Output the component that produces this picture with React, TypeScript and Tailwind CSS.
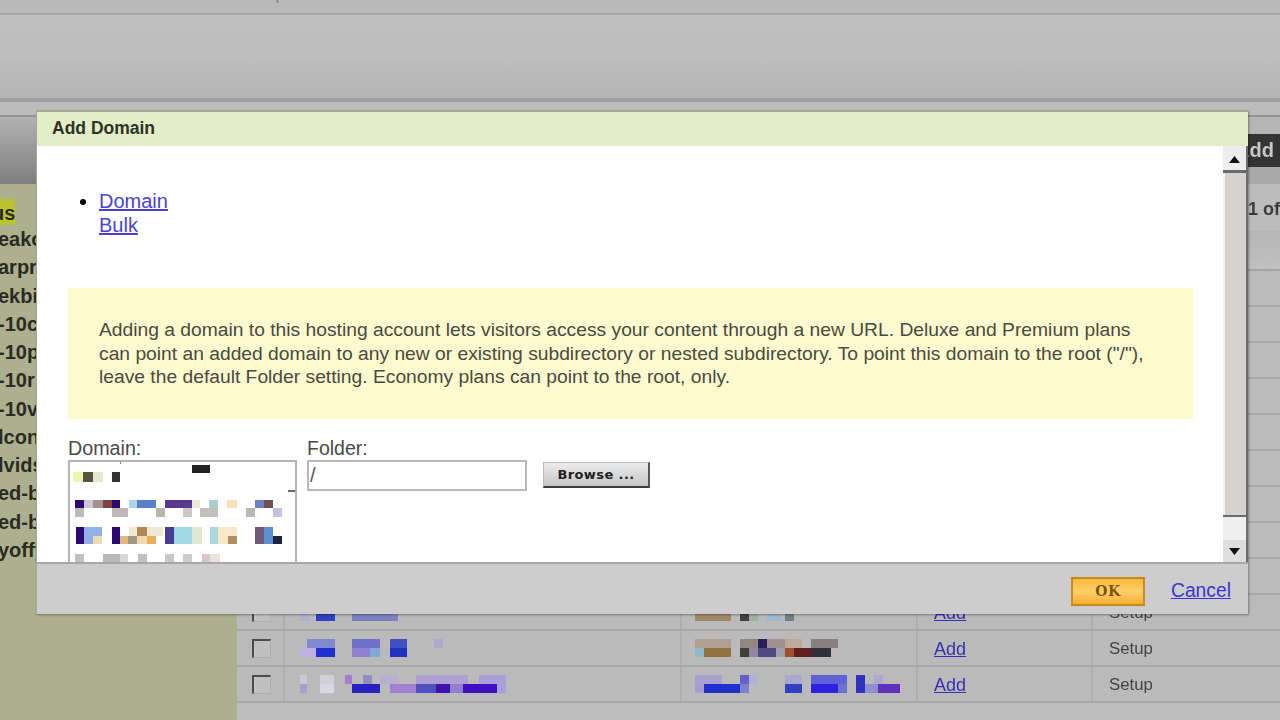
import React from 'react';

type Cell = [number, number, number, number, string];

// pixelated (censored) text blocks, coordinates are page pixels
const Mosaic: React.FC<{ x: number; y: number; w: number; h: number; cells: Cell[] }> = ({ x, y, w, h, cells }) => (
  <svg width={w} height={h} viewBox={`${x} ${y} ${w} ${h}`} className="block shrink-0">
    {cells.map((c, i) => (
      <rect key={i} x={c[0]} y={c[1]} width={c[2] - c[0]} height={c[3]} fill={c[4]} />
    ))}
  </svg>
);

const listCells: Cell[] = [
  [192, 465, 210, 8, '#222222'], [120, 462, 121, 2, '#888888'], [288, 490, 296, 2, '#666688'],
  [73, 472, 83, 10, '#eef5b0'], [83, 472, 93, 10, '#555540'], [93, 472, 103, 10, '#e8e8d0'], [112, 472, 120, 10, '#333333'],
  [75, 500, 84, 8, '#2a0a6e'], [84, 500, 93, 8, '#c8c8d8'], [93, 500, 103, 8, '#a09090'], [103, 500, 112, 8, '#804040'], [112, 500, 120, 8, '#2a0a70'],
  [129, 500, 137, 8, '#a8d8e8'], [137, 500, 156, 8, '#5a80c8'], [165, 500, 192, 8, '#5a3a90'], [192, 500, 200, 8, '#f0e8d8'], [209, 500, 218, 8, '#a8d0d0'],
  [227, 500, 237, 8, '#f5e0b8'], [255, 500, 264, 8, '#7080c8'], [264, 500, 273, 8, '#705050'],
  [75, 508, 84, 9, '#bbbbbb'], [112, 508, 128, 9, '#c0b8b8'], [156, 508, 165, 9, '#b8b8a8'], [183, 508, 192, 9, '#d0c8c0'], [200, 508, 218, 9, '#c0c0b8'],
  [246, 508, 255, 9, '#b8b8b0'], [273, 508, 282, 9, '#c8c0e0'],
  [76, 527, 84, 17, '#2a0a70'], [84, 527, 102, 9, '#90b0e8'], [112, 527, 120, 17, '#2a0a70'], [129, 527, 137, 9, '#f5e8d0'], [137, 527, 147, 9, '#b08850'],
  [147, 527, 163, 9, '#f0e8d0'], [165, 527, 174, 17, '#4a3a90'], [174, 527, 192, 17, '#a0d8e4'], [192, 527, 202, 17, '#e0e8d0'], [210, 527, 218, 17, '#a8d8e0'],
  [218, 527, 237, 9, '#f8e8c8'], [255, 527, 264, 17, '#705878'], [264, 527, 273, 17, '#5a90d0'],
  [84, 536, 93, 8, '#90b0e8'], [93, 536, 102, 8, '#f0d8b0'], [120, 536, 128, 8, '#e0b880'], [128, 536, 137, 8, '#a09880'], [137, 536, 147, 8, '#f0d8b0'],
  [147, 536, 156, 8, '#e8b060'], [218, 536, 228, 8, '#f8e8c8'], [228, 536, 237, 8, '#b09060'], [273, 536, 282, 8, '#202040'],
  [75, 554, 84, 9, '#c0c0c0'], [103, 554, 120, 9, '#b8b8b8'], [120, 554, 128, 9, '#d8d8d8'], [138, 554, 147, 9, '#c0c0c0'], [165, 554, 174, 9, '#c8c8c8'],
  [183, 554, 192, 9, '#cccccc'], [202, 554, 210, 9, '#d8c8c8'], [210, 554, 220, 9, '#f0e0e0'],
];

const names: Cell[][] = [
  [[300, 605, 309, 18, '#b0b0d0'], [316, 605, 335, 18, '#3040c0'], [352, 605, 398, 18, '#8080c0']],
  [
    [307, 640, 335, 9, '#8088d0'], [352, 640, 380, 9, '#7070c8'], [390, 640, 407, 9, '#4050c0'], [434, 640, 443, 9, '#b0a8d0'],
    [300, 649, 316, 9, '#c0b0e0'], [316, 649, 335, 9, '#2030d0'], [352, 649, 370, 9, '#9080d0'], [370, 649, 380, 9, '#80a8d8'], [390, 649, 407, 9, '#2030c0'],
  ],
  [
    [300, 677, 307, 9, '#c8c8d8'], [320, 677, 334, 9, '#d0d0d8'], [345, 677, 352, 9, '#a080c8'], [363, 677, 372, 9, '#9090c0'], [380, 677, 398, 9, '#b8b0d0'],
    [416, 677, 468, 9, '#b0a0d0'], [479, 677, 506, 9, '#a8a0d8'],
    [300, 686, 307, 9, '#a8a0c8'], [320, 686, 334, 9, '#d8d8e0'], [352, 686, 380, 9, '#2820c0'], [390, 686, 416, 9, '#a080d0'], [416, 686, 436, 9, '#5050c0'],
    [436, 686, 450, 9, '#4010b0'], [450, 686, 463, 9, '#9080d0'], [463, 686, 497, 9, '#4010c0'], [497, 686, 506, 9, '#a8a0d8'],
  ],
];

const hosts: Cell[][] = [
  [[695, 605, 731, 18, '#a08868'], [740, 605, 749, 18, '#404040'], [749, 605, 758, 18, '#a0b0a0'], [767, 605, 782, 18, '#a0b8c8'], [785, 605, 794, 18, '#708088']],
  [
    [695, 640, 731, 9, '#b0a090'], [740, 640, 758, 9, '#908880'], [758, 640, 767, 9, '#2a2060'], [767, 640, 785, 9, '#a09090'], [785, 640, 802, 9, '#c0a898'], [811, 640, 838, 9, '#888080'],
    [695, 649, 704, 9, '#90b8c8'], [704, 649, 731, 9, '#907040'], [740, 649, 749, 9, '#404038'], [749, 649, 758, 9, '#9088a0'], [758, 649, 776, 9, '#504880'],
    [776, 649, 785, 9, '#a0a0a8'], [785, 649, 794, 9, '#a05030'], [794, 649, 811, 9, '#602020'], [811, 649, 831, 9, '#303038'],
  ],
  [
    [695, 677, 722, 9, '#a8a0d0'], [740, 677, 749, 9, '#6060c8'], [749, 677, 758, 9, '#b0b0d8'], [785, 677, 802, 9, '#a8a8d0'], [811, 677, 847, 9, '#6060d8'],
    [856, 677, 865, 9, '#3030c0'], [874, 677, 883, 9, '#a8a8d0'],
    [695, 686, 704, 9, '#a0a0d0'], [704, 686, 740, 9, '#2030c8'], [740, 686, 749, 9, '#8080c8'], [785, 686, 802, 9, '#3040c0'], [811, 686, 838, 9, '#3020e0'],
    [838, 686, 847, 9, '#7070d0'], [856, 686, 865, 9, '#3030c0'], [865, 686, 878, 9, '#9090d0'], [878, 686, 900, 9, '#6030c0'],
  ],
];

const sites = ['eako', 'arpra', 'ekbi', '-10c', '-10p', '-10r', '-10v', 'lcon', 'lvids', 'ed-bi', 'ed-bi', 'yoffy'];

const ArrowIcon: React.FC<{ down?: boolean }> = ({ down }) => (
  <svg width="13" height="7" viewBox="0 0 13 7">
    <polygon points={down ? '1,0 12,0 6.5,7' : '6.5,0 12,7 1,7'} fill="#111" />
  </svg>
);

export default function App() {
  return (
    <div className="w-[1280px] h-[720px] overflow-hidden bg-[#bdbdbd]">
      <div className="relative w-[1280px] h-[720px] flex flex-col blur-[0.7px] font-['Liberation_Sans',Arial,sans-serif]">
        {/* top menu, cut off by the video frame */}
        <div className="h-[13px] bg-[#b9b9b9] flex pl-[4px] text-[17px] leading-[18px] text-[#777777] overflow-hidden shrink-0">
          <span className="w-[121px] -mt-[14px]">Access</span>
          <span className="w-[125px] -mt-[14px]">Network</span>
          <span className="-mt-[14px]">Help</span>
        </div>
        <div className="h-[2px] bg-[#a6a6a6] shrink-0" />
        <div className="h-[83px] bg-gradient-to-b from-[#bfbfbf] via-[#bebebe] to-[#b4b4b4] shrink-0" />
        <div className="h-[4px] bg-[#a0a0a0] shrink-0" />
        <div className="h-[15px] bg-[#bcbcbc] border-b-2 border-[#949494] shrink-0" />

        <div className="flex flex-1 min-h-0">
          {/* left site list */}
          <div className="w-[237px] shrink-0 flex flex-col bg-[#adb08f]">
            <div className="h-[67px] bg-gradient-to-b from-[#b2b2b2] to-[#7f7f7f] shrink-0" />
            <div className="pt-[15px] flex flex-col text-[20px] font-bold leading-[28.2px] text-[#2b2b22]">
              <div className="h-[26px] whitespace-nowrap overflow-hidden">
                <span className="inline-block w-[15px] bg-[#b9c42c] overflow-hidden">
                  <span className="inline-block -ml-[8px]">us</span>
                </span>
              </div>
              {sites.map((s, i) => (
                <div key={i} className="h-[28.25px] whitespace-nowrap overflow-hidden">
                  <span className="inline-block -ml-[2px]">{s}</span>
                </div>
              ))}
            </div>
          </div>

          {/* domains table */}
          <div className="flex-1 flex flex-col min-w-0">
            <div className="h-[17px] bg-[#b5b5b5] shrink-0" />
            <div className="h-[33px] bg-[#b5b5b5] flex justify-end shrink-0">
              <div className="w-[42px] bg-[#343434] text-[#c8c8c8] text-[20px] font-bold leading-[33px] overflow-hidden whitespace-nowrap">
                <span className="inline-block -ml-[3px]">Add</span>
              </div>
            </div>
            <div className="h-[17px] bg-[#a9a9a9] shrink-0" />
            <div className="h-[47px] bg-[#bcbcbc] flex justify-end shrink-0">
              <span className="w-[32px] text-[18px] font-bold leading-[50px] whitespace-nowrap text-[#3a3a3a] overflow-hidden">1 of</span>
            </div>
            <div className="h-[40px] bg-gradient-to-b from-[#b6b6b6] to-[#c0c0c0] border-b-2 border-[#a4a4a4] shrink-0" />
            {Array.from({ length: 9 }).map((_, i) => (
              <div key={i} className="h-[36px] border-b-2 border-[#a8a8a8] bg-[#bcbcbc] shrink-0" />
            ))}
            {[0, 1, 2].map(i => (
              <div key={i} className="h-[36px] flex border-b-2 border-[#a6a6a6] bg-[#bababa] shrink-0">
                <div className="w-[48px] border-r-2 border-[#aeaeae] flex items-center pl-[15px]">
                  <div className="w-[19px] h-[19px] border-t-2 border-l-2 border-[#4c4c4c] border-r border-b border-r-[#adadad] border-b-[#adadad] bg-[#c0c0c0]" />
                </div>
                <div className="w-[397px] border-r-2 border-[#aeaeae] flex items-center pl-[15px]">
                  <Mosaic x={300} y={i === 0 ? 605 : i === 1 ? 640 : 677} w={210} h={18} cells={names[i]} />
                </div>
                <div className="w-[236px] border-r-2 border-[#aeaeae] flex items-center pl-[13px]">
                  <Mosaic x={695} y={i === 0 ? 605 : i === 1 ? 640 : 677} w={210} h={18} cells={hosts[i]} />
                </div>
                <div className="w-[175px] border-r-2 border-[#aeaeae] flex items-center pl-[16px] pt-[2px]">
                  <a className="text-[18px] leading-[22px] text-[#3a2fb0] underline">Add</a>
                </div>
                <div className="flex-1 flex items-center pl-[16px] pt-[2px] text-[16.8px] text-[#444444]">Setup</div>
              </div>
            ))}
            <div className="flex-1 bg-[#bdbdbd]" />
          </div>
        </div>

        {/* Add Domain dialog */}
        <div className="absolute left-[36px] top-[110px] w-[1212px] h-[504px] flex flex-col border-t-2 border-l border-[#a6a893] shadow-[1px_1px_2px_rgba(0,0,0,0.35)]">
          <div className="h-[34px] shrink-0 bg-[#e3edc7] pl-[15px] text-[17.5px] font-bold leading-[32px] text-[#2f3328]">Add Domain</div>
          <div className="h-[418px] shrink-0 flex overflow-hidden bg-white border-b-2 border-[#a8a8a8]">
            <div className="flex-1 min-w-0 pl-[31px] pr-[30px] pt-[43px]">
              <ul className="list-disc pl-[31px] text-[20px] leading-[24px] text-[#4d3fd6]">
                <li className="marker:text-black">
                  <a className="block underline">Domain</a>
                  <a className="block underline">Bulk</a>
                </li>
              </ul>
              <div className="mt-[51px] h-[131px] bg-[#fdfacf] pl-[31px] pt-[30px] text-[19.25px] leading-[23.6px] text-[#4a4a40] whitespace-nowrap">
                Adding a domain to this hosting account lets visitors access your content through a new URL. Deluxe and Premium plans<br />
                can point an added domain to any new or existing subdirectory or nested subdirectory. To point this domain to the root ("/"),<br />
                leave the default Folder setting. Economy plans can point to the root, only.
              </div>
              <div className="mt-[17px] flex gap-[10px]">
                <div className="w-[229px] shrink-0">
                  <div className="text-[19.7px] leading-[24px] text-[#4a4a4a]">Domain:</div>
                  <div className="h-[120px] border-2 border-[#b4b4b4] bg-white overflow-hidden">
                    <Mosaic x={70} y={462} w={225} h={116} cells={listCells} />
                  </div>
                </div>
                <div>
                  <div className="text-[19.5px] leading-[24px] text-[#4a4a4a]">Folder:</div>
                  <div className="flex items-start gap-[16px]">
                    <input
                      defaultValue="/"
                      className="w-[220px] h-[31px] border-2 border-[#b8b8b8] rounded-[1px] px-[1px] text-[20px] text-[#555555] outline-none"
                    />
                    <button className="mt-[2px] w-[107px] h-[26px] bg-gradient-to-b from-[#ececec] to-[#c6c6c6] border border-[#bbbbbb] border-r-2 border-b-2 border-r-[#555555] border-b-[#3c3c3c] text-[13px] font-bold tracking-[0.4px] text-[#222222] font-['DejaVu_Sans',sans-serif]">
                      Browse ...
                    </button>
                  </div>
                </div>
              </div>
            </div>
            {/* scrollbar */}
            <div className="w-[25px] shrink-0 flex flex-col border-r-2 border-[#6f6d6a]">
              <div className="h-[24px] bg-[#ededed] flex items-center justify-center pt-[3px]">
                <ArrowIcon />
              </div>
              <div className="h-[3px] bg-[#6b6b6b]" />
              <div className="h-[342px] bg-[#d5d3cf] border-l-2 border-[#f2f2f2]" />
              <div className="h-[2px] bg-[#6b6b6b]" />
              <div className="h-[23px] bg-[#efefef]" />
              <div className="flex-1 bg-[#dedede] flex items-center justify-center">
                <ArrowIcon down />
              </div>
            </div>
          </div>
          <div className="flex-1 bg-[#cdcdcd] flex items-center justify-end pr-[17px] pt-[4px] gap-[26px]">
            <button className="w-[74px] h-[29px] bg-gradient-to-b from-[#fbb838] via-[#fdd06a] to-[#f6ae2e] border-2 border-[#c98a1c] text-[14px] font-bold tracking-[0.5px] text-[#7a5406] font-['DejaVu_Serif',serif]">
              OK
            </button>
            <a className="text-[19.3px] leading-[24px] text-[#3f33d6] underline">Cancel</a>
          </div>
        </div>
      </div>
    </div>
  );
}
